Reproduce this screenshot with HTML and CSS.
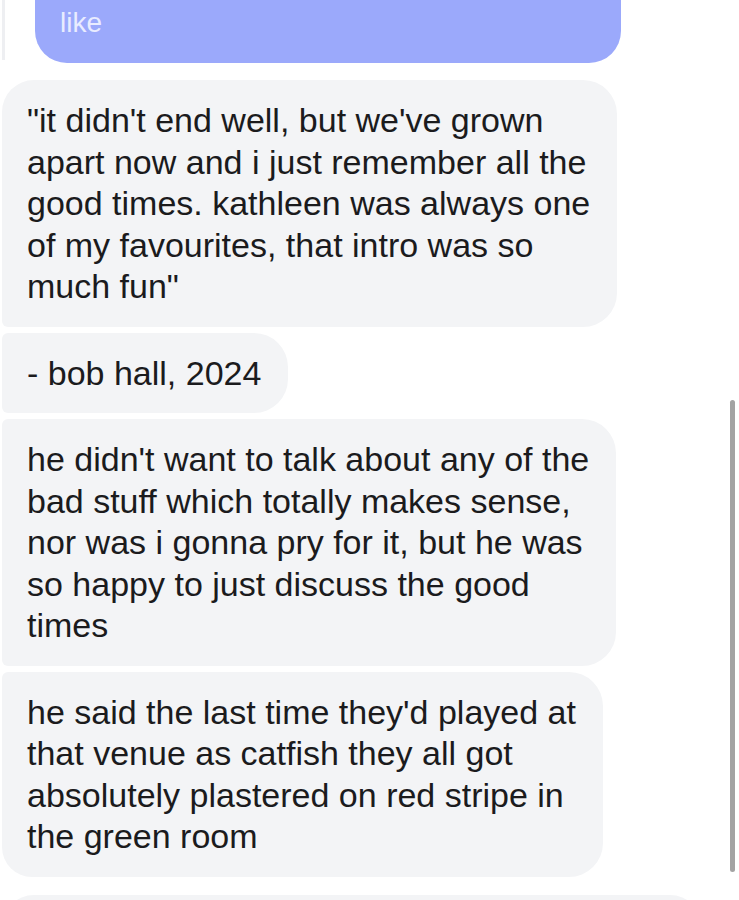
FILE: index.html
```html
<!DOCTYPE html>
<html>
<head>
<meta charset="utf-8">
<link rel="stylesheet" href="styles.css">
</head>
<body>
<div class="chat">
  <div class="row-out">
    <div class="edge-line"></div>
    <div class="bubble-out"><span class="out-text">like</span></div>
  </div>
  <div class="group">
    <div class="bubble first">"it didn't end well, but we've grown<br>apart now and i just remember all the<br>good times. kathleen was always one<br>of my favourites, that intro was so<br>much fun"</div>
    <div class="bubble">- bob hall, 2024</div>
    <div class="bubble">he didn't want to talk about any of the<br>bad stuff which totally makes sense,<br>nor was i gonna pry for it, but he was<br>so happy to just discuss the good<br>times</div>
    <div class="bubble last">he said the last time they'd played at<br>that venue as catfish they all got<br>absolutely plastered on red stripe in<br>the green room</div>
  </div>
  <div class="bubble next"></div>
</div>
<div class="scrollbar"></div>
</body>
</html>
```
FILE: styles.css
```css
html, body {
  margin: 0;
  padding: 0;
  background: #ffffff;
  overflow: hidden;
  height: 900px;
}
body {
  font-family: "Liberation Sans", Arial, sans-serif;
  color: #1b1b1d;
  position: relative;
}
.chat {
  display: flex;
  flex-direction: column;
  padding-left: 2px;
}
.row-out {
  display: flex;
  align-items: flex-end;
  height: 63px;
  margin-bottom: 17px;
}
.edge-line {
  width: 3px;
  height: 60px;
  background: #eeeff2;
  align-self: flex-start;
  margin-right: 30px;
}
.bubble-out {
  width: 586px;
  height: 93px;
  margin-top: -30px;
  background: #9ba9fb;
  border-radius: 0 0 32px 32px;
  box-sizing: border-box;
  padding: 0 25px;
  display: flex;
  align-items: flex-end;
  padding-bottom: 24px;
}
.out-text {
  font-size: 28px;
  color: #e9ecff;
  line-height: 32px;
}
.group {
  display: flex;
  flex-direction: column;
  align-items: flex-start;
  gap: 6px;
}
.bubble {
  background: #f3f4f6;
  font-size: 34px;
  line-height: 41.5px;
  padding: 20px 27px 19px 25px;
  border-radius: 6px 34px 34px 6px;
  white-space: nowrap;
}
.bubble.first {
  border-top-left-radius: 32px;
}
.bubble.last {
  border-bottom-left-radius: 30px;
}
.bubble.next {
  margin-top: 18px;
  width: 700px;
  height: 60px;
  padding: 0;
  border-radius: 32px 32px 6px 6px;
}
.scrollbar {
  position: absolute;
  left: 730px;
  top: 400px;
  width: 5px;
  height: 472px;
  border-radius: 3px;
  background: #a3a3a3;
}
```
